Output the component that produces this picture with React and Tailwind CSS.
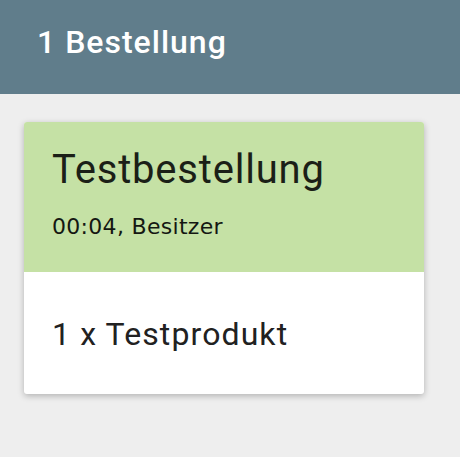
import React from "react";

const order = {
  title: "Testbestellung",
  time: "00:04",
  owner: "Besitzer",
  items: [{ qty: 1, name: "Testprodukt" }],
};

function OrderCard({ order }) {
  return (
    <div className="w-[400px] rounded-[3px] bg-white shadow-[0_2px_6px_rgba(0,0,0,0.25)] overflow-hidden">
      <div className="bg-[#c5e1a5] pl-[28px] pt-[25px] pb-[32px]">
        <h2 className="text-[40px] leading-[46px] tracking-[0.8px] text-[#1b1f17] font-['Roboto',sans-serif]">
          {order.title}
        </h2>
        <p className="mt-[21px] text-[22px] leading-[26px] tracking-[0.3px] text-[#141712] font-['DejaVu_Sans',sans-serif]">
          {order.time}, {order.owner}
        </p>
      </div>
      <div className="pl-[28px] pt-[43px] pb-[41px]">
        {order.items.map((item) => (
          <p
            key={item.name}
            className="text-[32px] leading-[38px] tracking-[1.1px] text-[#212121] font-['Roboto',sans-serif]"
          >
            {item.qty} x {item.name}
          </p>
        ))}
      </div>
    </div>
  );
}

export default function App() {
  return (
    <div className="min-h-[457px] w-[460px] bg-[#eeeeee] font-['Roboto',sans-serif]">
      <header className="h-[94px] bg-[#607d8b] pl-[37px] pt-[23px]">
        <h1 className="text-[32px] leading-[38px] tracking-[1px] font-medium text-white">1 Bestellung</h1>
      </header>
      <main className="pl-[24px] pt-[28px]">
        <OrderCard order={order} />
      </main>
    </div>
  );
}
